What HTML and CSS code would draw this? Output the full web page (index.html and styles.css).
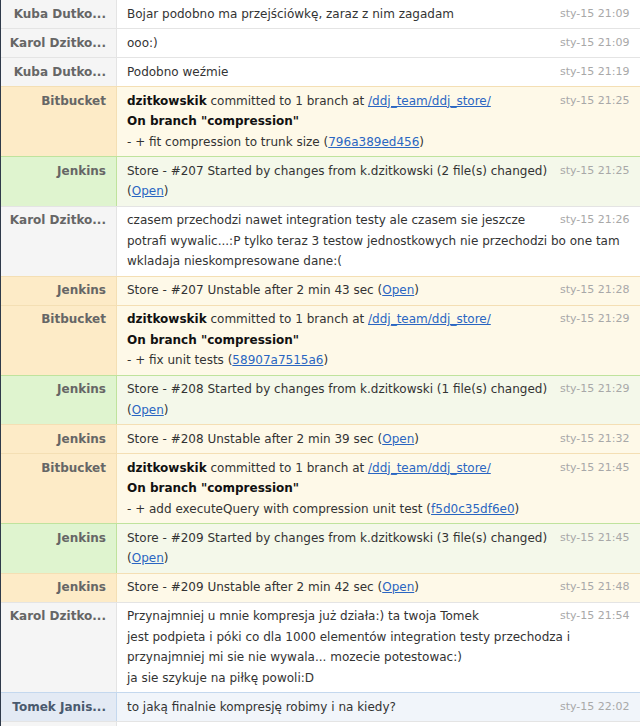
FILE: index.html
```html
<!DOCTYPE html>
<html lang="pl">
<head>
<meta charset="utf-8">
<title>Chat</title>
<link rel="stylesheet" href="styles.css">
</head>
<body>
<div class="log">
  <div class="row user">
    <div class="name">Kuba Dutko...</div>
    <div class="msg">Bojar podobno ma przejściówkę, zaraz z nim zagadam</div>
    <div class="time">sty-15 21:09</div>
  </div>
  <div class="row user">
    <div class="name">Karol Dzitko...</div>
    <div class="msg">ooo:)</div>
    <div class="time">sty-15 21:09</div>
  </div>
  <div class="row user">
    <div class="name">Kuba Dutko...</div>
    <div class="msg">Podobno weźmie</div>
    <div class="time">sty-15 21:19</div>
  </div>
  <div class="row yellow">
    <div class="name">Bitbucket</div>
    <div class="msg"><b>dzitkowskik</b> committed to 1 branch at <a href="#">/ddj_team/ddj_store/</a><br><b>On branch "compression"</b><br>- + fit compression to trunk size (<a href="#">796a389ed456</a>)</div>
    <div class="time">sty-15 21:25</div>
  </div>
  <div class="row green">
    <div class="name">Jenkins</div>
    <div class="msg">Store - #207 Started by changes from k.dzitkowski (2 file(s) changed)<br>(<a href="#">Open</a>)</div>
    <div class="time">sty-15 21:25</div>
  </div>
  <div class="row user">
    <div class="name">Karol Dzitko...</div>
    <div class="msg">czasem przechodzi nawet integration testy ale czasem sie jeszcze<br>potrafi wywalic...:P tylko teraz 3 testow jednostkowych nie przechodzi bo one tam<br>wkladaja nieskompresowane dane:(</div>
    <div class="time">sty-15 21:26</div>
  </div>
  <div class="row yellow">
    <div class="name">Jenkins</div>
    <div class="msg">Store - #207 Unstable after 2 min 43 sec (<a href="#">Open</a>)</div>
    <div class="time">sty-15 21:28</div>
  </div>
  <div class="row yellow">
    <div class="name">Bitbucket</div>
    <div class="msg"><b>dzitkowskik</b> committed to 1 branch at <a href="#">/ddj_team/ddj_store/</a><br><b>On branch "compression"</b><br>- + fix unit tests (<a href="#">58907a7515a6</a>)</div>
    <div class="time">sty-15 21:29</div>
  </div>
  <div class="row green">
    <div class="name">Jenkins</div>
    <div class="msg">Store - #208 Started by changes from k.dzitkowski (1 file(s) changed)<br>(<a href="#">Open</a>)</div>
    <div class="time">sty-15 21:29</div>
  </div>
  <div class="row yellow">
    <div class="name">Jenkins</div>
    <div class="msg">Store - #208 Unstable after 2 min 39 sec (<a href="#">Open</a>)</div>
    <div class="time">sty-15 21:32</div>
  </div>
  <div class="row yellow">
    <div class="name">Bitbucket</div>
    <div class="msg"><b>dzitkowskik</b> committed to 1 branch at <a href="#">/ddj_team/ddj_store/</a><br><b>On branch "compression"</b><br>- + add executeQuery with compression unit test (<a href="#">f5d0c35df6e0</a>)</div>
    <div class="time">sty-15 21:45</div>
  </div>
  <div class="row green">
    <div class="name">Jenkins</div>
    <div class="msg">Store - #209 Started by changes from k.dzitkowski (3 file(s) changed)<br>(<a href="#">Open</a>)</div>
    <div class="time">sty-15 21:45</div>
  </div>
  <div class="row yellow">
    <div class="name">Jenkins</div>
    <div class="msg">Store - #209 Unstable after 2 min 42 sec (<a href="#">Open</a>)</div>
    <div class="time">sty-15 21:48</div>
  </div>
  <div class="row user">
    <div class="name">Karol Dzitko...</div>
    <div class="msg">Przynajmniej u mnie kompresja już działa:) ta twoja Tomek<br>jest podpieta i póki co dla 1000 elementów integration testy przechodza i<br>przynajmniej mi sie nie wywala... mozecie potestowac:)<br>ja sie szykuje na piłkę powoli:D</div>
    <div class="time">sty-15 21:54</div>
  </div>
  <div class="row blue">
    <div class="name">Tomek Janis...</div>
    <div class="msg">to jaką finalnie kompresję robimy i na kiedy?</div>
    <div class="time">sty-15 22:02</div>
  </div>
  <div class="row user">
    <div class="name">&nbsp;</div>
    <div class="msg">&nbsp;</div>
    <div class="time">&nbsp;</div>
  </div>
</div>
</body>
</html>
```

FILE: styles.css
```css
html, body {
  margin: 0;
  padding: 0;
  background: #ffffff;
}
body {
  font-family: "DejaVu Sans", sans-serif;
  font-size: 12px;
  color: #333333;
  border-left: 1px solid #2f3a4a;
  min-height: 726px;
  overflow: hidden;
}
.log {
  display: flex;
  flex-direction: column;
}
.row {
  display: flex;
  line-height: 20.5px;
  border-top: 1px solid #e4e4e4;
}
.row:first-child {
  border-top: none;
}
.name {
  flex: none;
  width: 116px;
  box-sizing: border-box;
  padding: 3.5px 10px 4px 4px;
  text-align: right;
  font-weight: bold;
  color: #666666;
  white-space: nowrap;
  overflow: hidden;
  background: #f5f5f5;
  border-right: 1px solid #e4e4e4;
}
.msg {
  flex: 1;
  min-width: 0;
  padding: 3.5px 0 4px 10px;
  white-space: nowrap;
}
.time {
  flex: none;
  width: 80px;
  box-sizing: border-box;
  padding: 3.5px 11px 4px 0;
  text-align: right;
  font-size: 11px;
  color: #a8a8a8;
  white-space: nowrap;
}
.msg b {
  color: #111111;
}
a {
  color: #2a66c2;
  text-decoration: underline;
}
.yellow {
  background: #fef9e8;
  border-top-color: #f4dfb4;
}
.yellow .name {
  background: #fdebc7;
  border-right-color: #f4dfb4;
}
.green {
  background: #f4f8ea;
  border-top-color: #bfe39d;
}
.green .name {
  background: #dff4cf;
  border-right-color: #bfe39d;
}
.blue {
  background: #f1f5fa;
  border-top-color: #c4d8ee;
}
.blue .name {
  background: #e3eaf4;
  border-right-color: #c4d8ee;
  color: #4a5a6e;
}
```
